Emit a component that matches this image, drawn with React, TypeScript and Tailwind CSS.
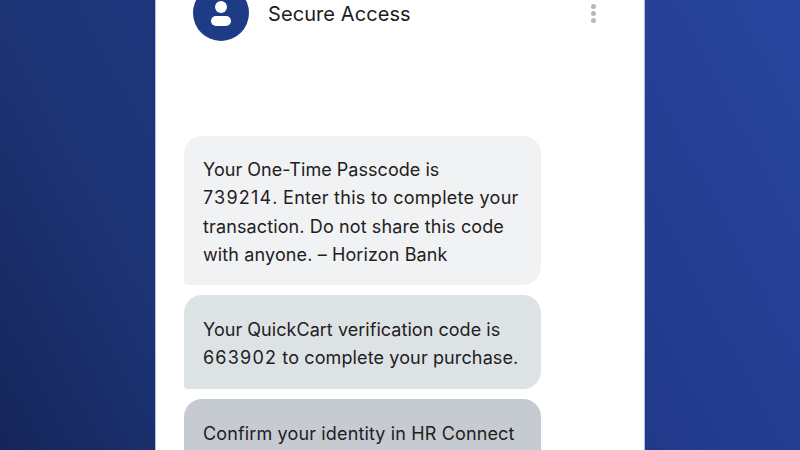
const messages = [
  {
    tone: "bg-[#f0f2f3] h-[149px] pt-[20px]",
    lines: [
      { text: "Your One-Time Passcode is", tracking: "tracking-[0.04px]" },
      { text: "739214. Enter this to complete your", tracking: "tracking-[0.26px]" },
      { text: "transaction. Do not share this code", tracking: "tracking-[0.12px]" },
      { text: "with anyone. – Horizon Bank", tracking: "tracking-[0.12px]" },
    ],
  },
  {
    tone: "bg-[#dde2e5] h-[94px] pt-[21px]",
    lines: [
      { text: "Your QuickCart verification code is", tracking: "tracking-[0.04px]" },
      { text: "663902 to complete your purchase.", tracking: "tracking-[0.12px]" },
    ],
  },
  {
    tone: "bg-[#c5cbd0] h-[94px] pt-[21px]",
    lines: [{ text: "Confirm your identity in HR Connect", tracking: "tracking-[0.14px]" }],
  },
];

// the digits run wider in the original typeface
function Line({ text, tracking }: { text: string; tracking: string }) {
  return (
    <p className={`whitespace-nowrap ${tracking}`}>
      {text.split(/(\d{6})/).map((part, i) =>
        i % 2 === 1 ? (
          <span key={i} className="tracking-[1.2px]">
            {part}
          </span>
        ) : (
          part
        )
      )}
    </p>
  );
}

export default function App() {
  return (
    <div className="flex h-[450px] w-[800px] justify-center overflow-hidden bg-[linear-gradient(62deg,#15255a_0%,#1d3476_23%,#22398a_62%,#28459e_100%)] font-['Inter',sans-serif]">
      <main className="h-[450px] w-[490px] overflow-hidden border-x border-[#aebde0] bg-white pl-[28px]">
        <header className="mt-[-15px] flex h-[56px] items-start">
          <div className="relative ml-[9px] h-[56px] w-[56px] shrink-0 rounded-full bg-[#1e3b85]">
            <span className="absolute left-[22px] top-[16px] h-[12px] w-[12px] rounded-full bg-white" />
            <span className="absolute left-[18px] top-[31px] h-[10px] w-[20px] rounded-full bg-white" />
          </div>
          <h1 className="ml-[19px] mt-[15px] text-[20px] leading-[28px] tracking-[0.08px] text-[#1c1c1e]">Secure Access</h1>
          <div className="ml-auto mr-[48px] mt-[19px] flex flex-col gap-[2px]">
            <span className="h-[5px] w-[5px] rounded-full bg-[#b5b7ba]" />
            <span className="h-[5px] w-[5px] rounded-full bg-[#b5b7ba]" />
            <span className="h-[5px] w-[5px] rounded-full bg-[#b5b7ba]" />
          </div>
        </header>
        <section className="mt-[95px] flex w-[357px] flex-col gap-[10px]">
          {messages.map((message) => (
            <div
              key={message.lines[0].text}
              className={`shrink-0 rounded-[18px] rounded-bl-[4px] px-[19px] text-[18px] leading-[28.3px] text-[#1f2022] ${message.tone}`}
            >
              {message.lines.map((line) => (
                <Line key={line.text} text={line.text} tracking={line.tracking} />
              ))}
            </div>
          ))}
        </section>
      </main>
    </div>
  );
}
